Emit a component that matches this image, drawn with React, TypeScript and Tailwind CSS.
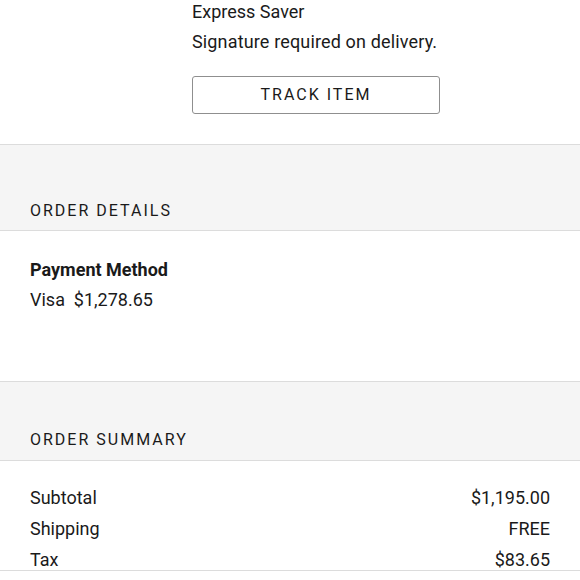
import React from "react";

const font = { fontFamily: "Roboto, 'Liberation Sans', sans-serif" };

function SectionHeader({ title, h, pb }: { title: string; h: string; pb: string }) {
  return (
    <div className={`flex items-end border-y border-[#dcdcdc] bg-[#f5f5f5] px-[30px] ${pb} ${h}`}>
      <div className="text-[16px] leading-[20px] tracking-[2px] text-[#1a1a1a]">{title}</div>
    </div>
  );
}

function Row({ label, value }: { label: string; value: string }) {
  return (
    <div className="flex justify-between text-[18px] leading-[31px] text-[#1a1a1a]">
      <span>{label}</span>
      <span>{value}</span>
    </div>
  );
}

export default function App() {
  return (
    <div className="h-[580px] w-[580px] overflow-hidden bg-white" style={font}>
      <div className="pl-[192px] pb-[30px] -mt-[3px] text-[18px] leading-[30px] text-[#1a1a1a]">
        <div>Express Saver</div>
        <div className="tracking-[0.15px]">Signature required on delivery.</div>
        <button className="mt-[19px] flex h-[38px] w-[248px] items-center justify-center rounded-[3px] border border-[#8f8f8f] bg-white text-[16px] tracking-[2px] text-[#1a1a1a]">
          TRACK ITEM
        </button>
      </div>
      <SectionHeader title="ORDER DETAILS" h="h-[87px]" pb="pb-[9px]" />
      <div className="h-[150px] px-[30px] pt-[24px] text-[18px] leading-[30px] text-[#1a1a1a]">
        <div className="font-bold">Payment Method</div>
        <div>Visa&nbsp;&nbsp;$1,278.65</div>
      </div>
      <SectionHeader title="ORDER SUMMARY" h="h-[80px]" pb="pb-[10px]" />
      <div className="h-[110px] border-b border-[#dcdcdc] px-[30px] pt-[21px]">
        <Row label="Subtotal" value="$1,195.00" />
        <Row label="Shipping" value="FREE" />
        <Row label="Tax" value="$83.65" />
      </div>
    </div>
  );
}
